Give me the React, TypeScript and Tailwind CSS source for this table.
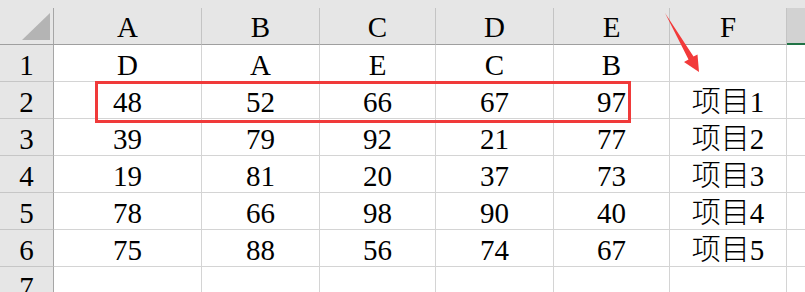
import React from "react";

const cols = ["A", "B", "C", "D", "E", "F"];
const rows: string[][] = [
  ["D", "A", "E", "C", "B", ""],
  ["48", "52", "66", "67", "97", "项目1"],
  ["39", "79", "92", "21", "77", "项目2"],
  ["19", "81", "20", "37", "73", "项目3"],
  ["78", "66", "98", "90", "40", "项目4"],
  ["75", "88", "56", "74", "67", "项目5"],
  ["", "", "", "", "", ""],
];

const font = { fontFamily: '"Liberation Serif", "Noto Sans CJK SC", serif' };

export default function App() {
  return (
    <div className="relative w-[805px] h-[292px] overflow-hidden bg-white text-black" style={font}>
      <div className="h-[8px] bg-[#e6e6e6]" />
      <div className="grid grid-cols-[54px_148px_118px_116px_118px_116px_117px_1fr] text-[29px] leading-none">
        {/* header row */}
        <div className="h-[37px] bg-[#e6e6e6] border-r border-r-[#a6a6a6] border-b border-b-[#9f9f9f] relative">
          <svg className="absolute left-0 top-0" width="54" height="37" viewBox="0 0 54 37">
            <polygon points="22,32 50,5 50,32" fill="#b4b4b4" />
          </svg>
        </div>
        {cols.map((c) => (
          <div
            key={c}
            className="h-[37px] bg-[#e6e6e6] border-r border-r-[#c4c4c4] border-b border-b-[#9f9f9f] flex items-center justify-center pt-[3px]"
          >
            {c}
          </div>
        ))}
        <div className="h-[37px] bg-[#d2d2d2] border-b-2 border-b-[#217346]" />

        {rows.map((r, i) => (
          <React.Fragment key={i}>
            <div className="h-[37px] bg-[#e6e6e6] border-r border-r-[#a6a6a6] border-b border-b-[#c6c6c6] flex items-center justify-center pt-[4px]">
              {i + 1}
            </div>
            {r.map((v, j) => (
              <div
                key={j}
                className={
                  "h-[37px] border-r border-r-[#d4d4d4] border-b border-b-[#d4d4d4] flex items-center justify-center pt-[4px]" +
                  (j === 5 ? " font-light" : "")
                }
              >
                {v}
              </div>
            ))}
            <div className="h-[37px] border-b border-b-[#d4d4d4]" />
          </React.Fragment>
        ))}
      </div>

      {/* red selection box */}
      <div className="absolute left-[95px] top-[81px] w-[536px] h-[42px] border-[3px] border-[#f03a3a]" />

      {/* red arrow */}
      <svg className="absolute left-0 top-0 pointer-events-none" width="805" height="292" viewBox="0 0 805 292">
        <polygon
          points="665,13 693.5,56.5 697.5,54.5 699,72 684,62 688.5,59.5"
          fill="#f23a3a"
        />
      </svg>
    </div>
  );
}
